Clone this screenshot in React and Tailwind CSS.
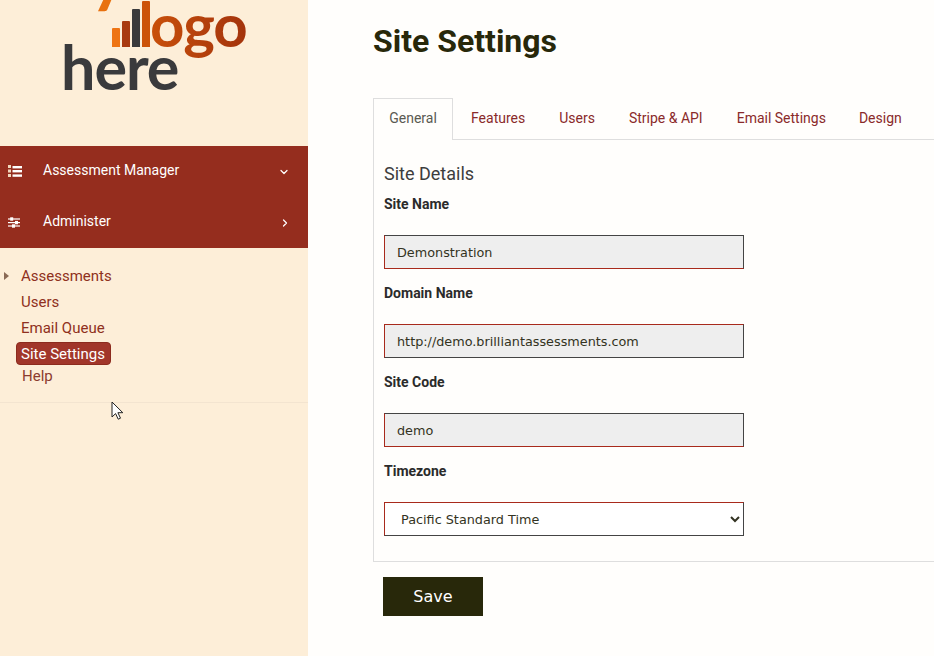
import React from 'react';
import { ChevronDown, ChevronRight } from 'lucide-react';

const tabs = ['Features', 'Users', 'Stripe & API', 'Email Settings', 'Design'];

const Logo = () => (
  <div className="relative h-[146px] overflow-hidden">
    <span className="absolute left-[90px] top-[-54px] text-[70px] leading-[52px] font-bold text-[#e8710f] font-['Lato',sans-serif]">your</span>
    <div className="absolute left-[112px] top-[1px] h-[46px] flex items-end gap-[2px]">
      <div className="w-[8px] h-[19px] bg-[#ee7414] rounded-t-[1px]" />
      <div className="w-[8px] h-[26px] bg-[#a93a10] rounded-t-[1px]" />
      <div className="w-[8px] h-[38px] bg-[#3a3a3c] rounded-t-[1px]" />
      <div className="w-[8px] h-[46px] bg-[#cc5208] rounded-t-[1px]" />
    </div>
    <span className="absolute left-[150px] top-[-11px] text-[60px] leading-[70px] tracking-[-1px] font-bold font-['Lato',sans-serif] bg-gradient-to-r from-[#c9500a] to-[#a3330c] bg-clip-text text-transparent">ogo</span>
    <span className="absolute left-[61px] top-[32px] text-[61px] leading-[70px] tracking-[-1px] font-bold text-[#3a3a3c] font-['Lato',sans-serif]">here</span>
  </div>
);

const ListIcon = () => (
  <svg width="15" height="15" viewBox="0 0 15 15" className="shrink-0">
    <rect x="0" y="2" width="3" height="3" fill="#f1d8bd" />
    <rect x="0" y="6.5" width="3" height="3" fill="#f1d8bd" />
    <rect x="0" y="11" width="3" height="3" fill="#f1d8bd" />
    <rect x="4.5" y="3" width="9.5" height="2.4" fill="#fff" />
    <rect x="4.5" y="7" width="9.5" height="2.4" fill="#fff" />
    <rect x="4.5" y="11.4" width="9.5" height="2.4" fill="#fff" />
  </svg>
);

const SlidersIcon = () => (
  <svg width="13" height="13" viewBox="0 0 13 13" fill="#fff" className="shrink-0">
    <rect x="0" y="3.4" width="12" height="1.2" />
    <rect x="0" y="7" width="12" height="1.2" />
    <rect x="0" y="10.4" width="12" height="1.2" />
    <rect x="2.2" y="2.3" width="3" height="3.4" />
    <rect x="7" y="5.9" width="3" height="3.4" />
    <rect x="4" y="9.3" width="3" height="3.4" />
  </svg>
);

const Field = ({ label, value, borders }) => (
  <div className="h-[89px]">
    <div className="h-[41px] pt-[1px] text-[14px] leading-[18px] font-bold text-[#2b2b2b]">{label}</div>
    <div className={`w-[360px] h-[34px] border bg-[#eeeeee] pl-3 pt-[1px] flex items-center text-[12.8px] text-[#333322] font-['DejaVu_Sans',sans-serif] ${borders}`}>
      {value}
    </div>
  </div>
);

export default function App() {
  return (
    <div className="flex w-[934px] h-[656px] overflow-hidden bg-[#fffefc] font-['Roboto',sans-serif]">
      <aside className="relative w-[308px] shrink-0 bg-[#fdeed8]">
        <Logo />
        <nav className="bg-[#952d1e] text-white text-[14px]">
          <div className="h-[51px] flex items-center pl-[8px] pr-[17px] pb-[2px]">
            <ListIcon />
            <span className="ml-[20px] flex-1">Assessment Manager</span>
            <ChevronDown size={12} strokeWidth={2.5} className="mr-[1px] mt-[2px]" />
          </div>
          <div className="h-[51px] flex items-center pl-[8px] pr-[17px] pb-[2px]">
            <SlidersIcon />
            <span className="ml-[22px] flex-1">Administer</span>
            <ChevronRight size={12} strokeWidth={2.5} className="mt-[2px]" />
          </div>
        </nav>
        <div className="h-[155px] border-b border-[#f3e4d0] pt-[15px] text-[15px] text-[#8f3020]">
          <div className="relative h-[26px] pl-[21px] leading-[26px]">
            <span className="absolute left-[4px] top-[9px] border-y-[4px] border-l-[5px] border-y-transparent border-l-[#8a6a55]" />
            Assessments
          </div>
          <div className="h-[26px] pl-[21px] leading-[26px]">Users</div>
          <div className="h-[26px] pl-[21px] leading-[26px]">Email Queue</div>
          <div className="ml-[16px] mt-[1px] w-[95px] h-[23px] pl-[4px] rounded-[4px] bg-[#a1362a] border border-[#8c2b1e] text-white leading-[22px]">Site Settings</div>
          <div className="h-[20px] pl-[22px] leading-[23px] text-[#8c3b2e]">Help</div>
        </div>
        <svg className="absolute left-[111px] top-[401px]" width="13" height="19" viewBox="0 0 13 19">
          <path d="M1 1v15l3.6-3.4 2.6 5.6 2.3-1-2.6-5.5h4.9z" fill="#fff" stroke="#222" strokeWidth="1" />
        </svg>
      </aside>
      <main className="flex-1 pl-[65px] pt-[23px]">
        <h1 className="h-[75px] text-[32px] leading-[37px] font-bold text-[#28280a]">Site Settings</h1>
        <div className="flex h-[42px] border-b border-[#dedede] text-[14px]">
          <div className="w-[80px] h-[42px] border border-b-0 border-[#dedede] bg-[#fffefc] text-center leading-[38px] text-[#5a5a52]">General</div>
          <div className="flex ml-[1px]">
            {tabs.map((t) => (
              <div key={t} className="px-[17px] last:pl-[16px] leading-[40px] text-[#8a2a2a]">{t}</div>
            ))}
          </div>
        </div>
        <div className="h-[422px] border-l border-b border-[#dedede] pl-[10px] pt-[22px]">
          <div className="h-[32px] text-[18px] leading-[24px] text-[#3d3d3d]">Site Details</div>
          <Field label="Site Name" value="Demonstration" borders="border-t-[#444444] border-r-[#444444] border-l-[#a82a1c] border-b-[#a82a1c]" />
          <Field label="Domain Name" value="http://demo.brilliantassessments.com" borders="border-t-[#a82a1c] border-l-[#a82a1c] border-r-[#444444] border-b-[#444444]" />
          <Field label="Site Code" value="demo" borders="border-t-[#444444] border-r-[#444444] border-l-[#a82a1c] border-b-[#a82a1c]" />
          <div className="h-[41px] pt-[1px] text-[14px] leading-[18px] font-bold text-[#2b2b2b]">Timezone</div>
          <select defaultValue="pst" className="w-[360px] h-[34px] border border-t-[#a82a1c] border-l-[#a82a1c] border-r-[#444444] border-b-[#444444] bg-white pl-3 text-[12.8px] text-[#333322] font-['DejaVu_Sans',sans-serif]">
            <option value="pst">Pacific Standard Time</option>
          </select>
        </div>
        <button className="mt-[15px] ml-[10px] w-[100px] h-[39px] pt-[1px] bg-[#28280a] text-white text-[16px] font-['DejaVu_Sans',sans-serif]">Save</button>
      </main>
    </div>
  );
}
